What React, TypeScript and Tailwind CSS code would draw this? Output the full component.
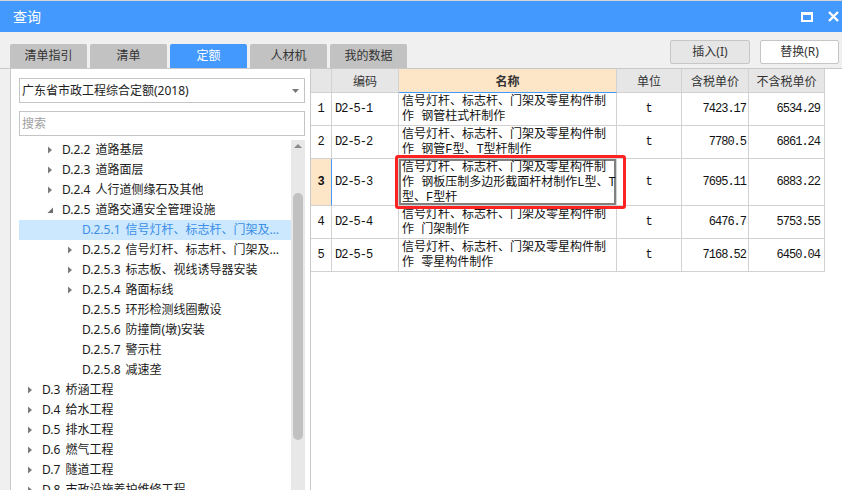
import React from "react";

type Row = {
  n: number;
  code: string;
  name: string[];
  unit: string;
  p1: string;
  p2: string;
  tall?: boolean;
  selected?: boolean;
};

const rows: Row[] = [
  { n: 1, code: "D2-5-1", name: ["信号灯杆、标志杆、门架及零星构件制", "作 钢管柱式杆制作"], unit: "t", p1: "7423.17", p2: "6534.29" },
  { n: 2, code: "D2-5-2", name: ["信号灯杆、标志杆、门架及零星构件制", "作 钢管F型、T型杆制作"], unit: "t", p1: "7780.5", p2: "6861.24" },
  { n: 3, code: "D2-5-3", name: ["信号灯杆、标志杆、门架及零星构件制", "作 钢板压制多边形截面杆材制作L型、T", "型、F型杆"], unit: "t", p1: "7695.11", p2: "6883.22", tall: true, selected: true },
  { n: 4, code: "D2-5-4", name: ["信号灯杆、标志杆、门架及零星构件制", "作 门架制作"], unit: "t", p1: "6476.7", p2: "5753.55" },
  { n: 5, code: "D2-5-5", name: ["信号灯杆、标志杆、门架及零星构件制", "作 零星构件制作"], unit: "t", p1: "7168.52", p2: "6450.04" },
];

type Node = { level: number; code: string; label: string; state: "open" | "closed" | "leaf"; active?: boolean };

const tree: Node[] = [
  { level: 2, code: "D.2.2", label: "道路基层", state: "closed" },
  { level: 2, code: "D.2.3", label: "道路面层", state: "closed" },
  { level: 2, code: "D.2.4", label: "人行道侧缘石及其他", state: "closed" },
  { level: 2, code: "D.2.5", label: "道路交通安全管理设施", state: "open" },
  { level: 3, code: "D.2.5.1", label: "信号灯杆、标志杆、门架及零星构件制作", state: "leaf", active: true },
  { level: 3, code: "D.2.5.2", label: "信号灯杆、标志杆、门架及零星构件安装", state: "closed" },
  { level: 3, code: "D.2.5.3", label: "标志板、视线诱导器安装", state: "closed" },
  { level: 3, code: "D.2.5.4", label: "路面标线", state: "closed" },
  { level: 3, code: "D.2.5.5", label: "环形检测线圈敷设", state: "leaf" },
  { level: 3, code: "D.2.5.6", label: "防撞筒(墩)安装", state: "leaf" },
  { level: 3, code: "D.2.5.7", label: "警示柱", state: "leaf" },
  { level: 3, code: "D.2.5.8", label: "减速垄", state: "leaf" },
  { level: 1, code: "D.3", label: "桥涵工程", state: "closed" },
  { level: 1, code: "D.4", label: "给水工程", state: "closed" },
  { level: 1, code: "D.5", label: "排水工程", state: "closed" },
  { level: 1, code: "D.6", label: "燃气工程", state: "closed" },
  { level: 1, code: "D.7", label: "隧道工程", state: "closed" },
  { level: 1, code: "D.8", label: "市政设施养护维修工程", state: "closed" },
];

const indent: Record<number, string> = { 1: "pl-[8px]", 2: "pl-[28px]", 3: "pl-[48px]" };

function Arrow({ state }: { state: Node["state"] }) {
  if (state === "closed")
    return (
      <svg width="15" height="20" viewBox="0 0 15 20" className="shrink-0">
        <path d="M1 6.5 L5 10 L1 13.5 Z" fill="#7b7b7b" />
      </svg>
    );
  if (state === "open")
    return (
      <svg width="15" height="20" viewBox="0 0 15 20" className="shrink-0">
        <path d="M6 7.5 L6 13 L0.5 13 Z" fill="#6f6f6f" />
      </svg>
    );
  return <span className="w-[15px] shrink-0" />;
}

const tabs = ["清单指引", "清单", "定额", "人材机", "我的数据"];

export default function App() {
  return (
    <div className="w-[842px] h-[490px] overflow-hidden bg-[#f0f0f0] flex flex-col font-['Noto_Sans','Noto_Sans_CJK_SC',sans-serif] text-[12px] text-[#222]">
      <div className="h-[1px] bg-[#d6d6d6]" />
      <div className="h-[31px] bg-[#4499ff] flex items-center justify-between pl-[13px] pr-[3px]">
        <span className="text-white text-[14px]">查询</span>
        <div className="flex items-center gap-[15px]">
          <svg width="12" height="10" viewBox="0 0 12 10">
            <rect x="1" y="1" width="10" height="8" fill="none" stroke="#fff" strokeWidth="2" />
            <rect x="0" y="0" width="12" height="3" fill="#fff" />
          </svg>
          <svg width="11" height="11" viewBox="0 0 11 11">
            <path d="M1 1 L10 10 M10 1 L1 10" stroke="#fff" strokeWidth="2.4" />
          </svg>
        </div>
      </div>
      <div className="h-[37px] flex justify-between pl-[10px] pr-[3px] border-b border-[#c9c9c9]">
        <div className="flex items-end gap-[3px]">
          {tabs.map((t) => (
            <div
              key={t}
              className={
                t === "定额"
                  ? "w-[77px] h-[24px] rounded-t-[2px] bg-[#4499ff] text-white flex items-center justify-center"
                  : "w-[77px] h-[24px] rounded-t-[2px] bg-[#c2c2c2] text-[#333] flex items-center justify-center"
              }
            >
              {t}
            </div>
          ))}
        </div>
        <div className="flex gap-[10px] pt-[8px]">
          <div className="w-[80px] h-[24px] border border-[#c6c6c6] bg-[#e6e6e6] rounded-[2px] flex items-center justify-center text-[#333]">插入(I)</div>
          <div className="w-[79px] h-[24px] border border-[#c6c6c6] bg-white rounded-[2px] flex items-center justify-center text-[#333]">替换(R)</div>
        </div>
      </div>
      <div className="flex-1 flex min-h-0">
        <div className="ml-[10px] w-[301px] bg-white border-l border-r border-[#c9c9c9] flex flex-col pl-[8px] pr-[5px] pt-[9px]">
          <div className="h-[25px] border border-[#c4c4c4] flex items-center justify-between pl-[2px] pr-[5px]">
            <span>广东省市政工程综合定额(2018)</span>
            <svg width="7" height="4" viewBox="0 0 7 4">
              <path d="M0 0 L7 0 L3.5 4 Z" fill="#777" />
            </svg>
          </div>
          <div className="mt-[8px] h-[25px] border border-[#c4c4c4] flex items-center pl-[2px] text-[#a0a0a0]">搜索</div>
          <div className="mt-[4px] flex-1 flex min-h-0">
            <div className="flex-1 min-w-0 flex flex-col">
              {tree.map((n) => (
                <div
                  key={n.code}
                  className={
                    (n.active ? "bg-[#cce8ff] text-[#3a8ee6] " : "text-[#1a1a1a] ") +
                    "h-[20px] shrink-0 flex items-center leading-[20px] pr-[6px] " +
                    indent[n.level]
                  }
                >
                  <Arrow state={n.state} />
                  <span className="truncate">
                    <span className="mr-[5px]">{n.code}</span>
                    {n.label}
                  </span>
                </div>
              ))}
            </div>
            <div className="w-[14px] bg-[#e8e8e8] flex flex-col items-center">
              <svg width="8" height="15" viewBox="0 0 8 15" className="shrink-0">
                <path d="M0 8 L8 8 L4 4 Z" fill="#8a8a8a" />
              </svg>
              <div className="mt-[38px] w-[10px] h-[247px] rounded-[5px] bg-[#c1c1c1]" />
            </div>
          </div>
        </div>
        <div className="flex-1 bg-white relative">
          <div className="grid grid-cols-[21px_67px_218px_65px_67px_76px] w-[514px] font-['Liberation_Mono','Noto_Sans_CJK_SC',monospace] text-[12px] text-[#111]">
            <div className="h-[24px] bg-[#e6e6e6] border-r border-b border-[#d2d2d2]" />
            <div className="h-[24px] bg-[#e6e6e6] border-r border-b border-[#d2d2d2] flex items-center justify-center font-['Noto_Sans_CJK_SC',sans-serif] text-[#333]">编码</div>
            <div className="h-[24px] bg-[#fde5c7] border-r border-b border-r-[#d2d2d2] border-b-[#4499ff] flex items-center justify-center font-['Noto_Sans_CJK_SC',sans-serif] font-bold text-[#333]">名称</div>
            <div className="h-[24px] bg-[#e6e6e6] border-r border-b border-[#d2d2d2] flex items-center justify-center font-['Noto_Sans_CJK_SC',sans-serif] text-[#333]">单位</div>
            <div className="h-[24px] bg-[#e6e6e6] border-r border-b border-[#d2d2d2] flex items-center justify-center font-['Noto_Sans_CJK_SC',sans-serif] text-[#333]">含税单价</div>
            <div className="h-[24px] bg-[#e6e6e6] border-r border-b border-[#d2d2d2] flex items-center justify-center font-['Noto_Sans_CJK_SC',sans-serif] text-[#333]">不含税单价</div>
            {rows.map((r) => {
              const h = r.tall ? "h-[47px]" : "h-[33px]";
              return (
                <React.Fragment key={r.n}>
                  <div
                    className={
                      h +
                      (r.selected
                        ? " bg-[#fde5c7] font-bold border-r border-b border-r-[#4499ff] border-b-[#d2d2d2]"
                        : " bg-white border-r border-b border-[#d2d2d2]") +
                      " flex items-center justify-center"
                    }
                  >
                    {r.n}
                  </div>
                  <div className={h + " border-r border-b border-[#d2d2d2] flex items-center pl-[3px] tracking-[-1px]"}>{r.code}</div>
                  <div
                    className={
                      h +
                      " border-r border-b border-[#d2d2d2] pl-[3px] pt-[2px] leading-[15px] whitespace-nowrap overflow-hidden" +
                      (r.selected ? " shadow-[inset_0_0_0_2px_#808080]" : "")
                    }
                  >
                    {r.name.map((l) => (
                      <div key={l}>{l}</div>
                    ))}
                  </div>
                  <div className={h + " border-r border-b border-[#d2d2d2] flex items-center justify-center"}>{r.unit}</div>
                  <div className={h + " border-r border-b border-[#d2d2d2] flex items-center justify-end pr-[2px] tracking-[-1px]"}>{r.p1}</div>
                  <div className={h + " border-r border-b border-[#d2d2d2] flex items-center justify-end pr-[4px] tracking-[-1px]"}>{r.p2}</div>
                </React.Fragment>
              );
            })}
          </div>
          <div className="absolute left-[84px] top-[86px] w-[231px] h-[54px] border-[3px] border-[#ff2222] rounded-[3px]" />
        </div>
      </div>
    </div>
  );
}
